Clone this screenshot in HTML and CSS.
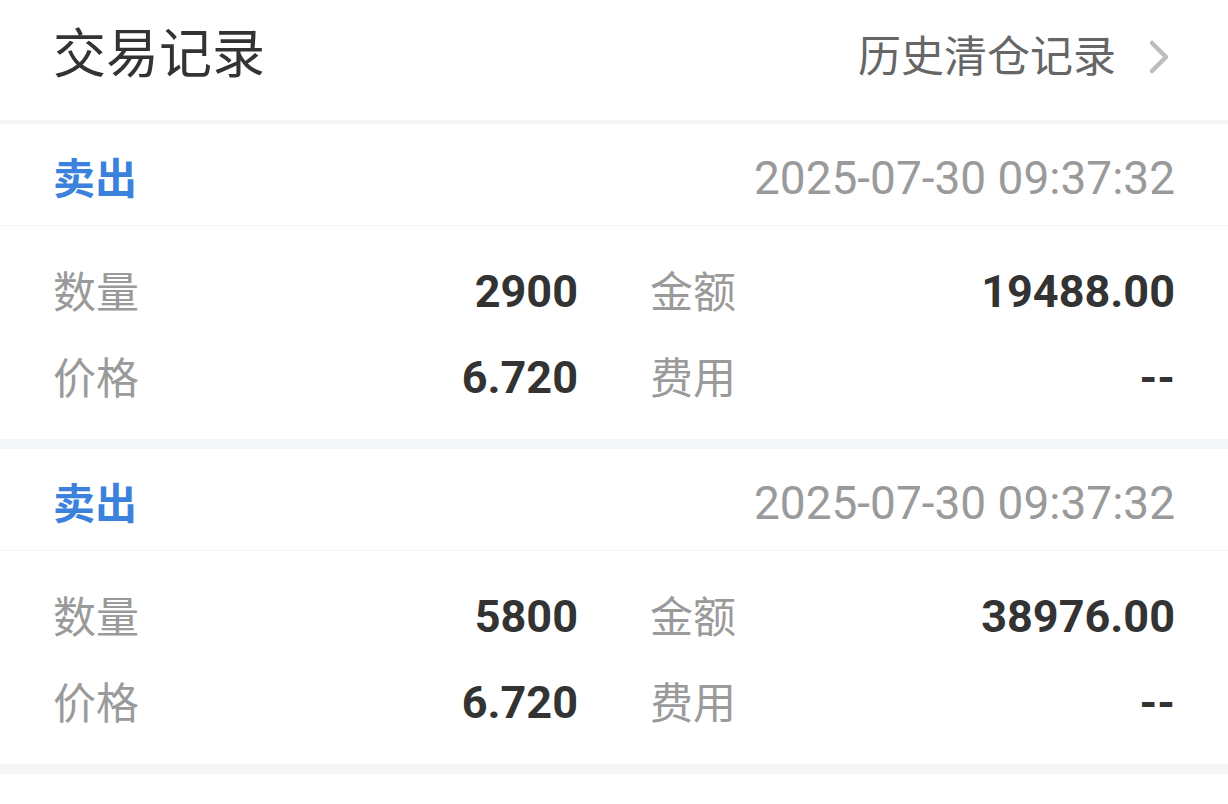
FILE: index.html
```html
<!DOCTYPE html>
<html lang="zh-CN">
<head>
    <meta charset="UTF-8">
    <meta name="viewport" content="width=device-width, initial-scale=1.0">
    <title>交易记录</title>
    <link rel="stylesheet" href="styles.css">
</head>
<body>
    <header class="top-bar">
        <h1 class="page-title">交易记录</h1>
        <a class="history-link" href="#">
            <span>历史清仓记录</span>
            <svg class="chevron" width="22" height="36" viewBox="0 0 22 36">
                <path d="M4 4 L18 18 L4 32" fill="none" stroke="#bdbdbd" stroke-width="4.5" stroke-linecap="round" stroke-linejoin="round"/>
            </svg>
        </a>
    </header>

    <div class="trade-list">
        <div class="trade-card">
            <div class="trade-head">
                <span class="trade-side">卖出</span>
                <span class="trade-time">2025-07-30 09:37:32</span>
            </div>
            <div class="trade-body">
                <div class="field"><span class="label">数量</span><span class="value">2900</span></div>
                <div class="field"><span class="label">金额</span><span class="value">19488.00</span></div>
                <div class="field"><span class="label">价格</span><span class="value">6.720</span></div>
                <div class="field"><span class="label">费用</span><span class="value">--</span></div>
            </div>
        </div>

        <div class="trade-card">
            <div class="trade-head">
                <span class="trade-side">卖出</span>
                <span class="trade-time">2025-07-30 09:37:32</span>
            </div>
            <div class="trade-body">
                <div class="field"><span class="label">数量</span><span class="value">5800</span></div>
                <div class="field"><span class="label">金额</span><span class="value">38976.00</span></div>
                <div class="field"><span class="label">价格</span><span class="value">6.720</span></div>
                <div class="field"><span class="label">费用</span><span class="value">--</span></div>
            </div>
        </div>

        <div class="trade-card">
            <div class="trade-head">
                <span class="trade-side">卖出</span>
                <span class="trade-time">2025-07-30 09:37:32</span>
            </div>
            <div class="trade-body">
                <div class="field"><span class="label">数量</span><span class="value">2900</span></div>
                <div class="field"><span class="label">金额</span><span class="value">19488.00</span></div>
                <div class="field"><span class="label">价格</span><span class="value">6.720</span></div>
                <div class="field"><span class="label">费用</span><span class="value">--</span></div>
            </div>
        </div>
    </div>
</body>
</html>
```

FILE: styles.css
```css
body {
    margin: 0;
    background: #ffffff;
    font-family: Roboto, "Noto Sans CJK SC", sans-serif;
    overflow: hidden;
}
.top-bar {
    display: flex;
    justify-content: space-between;
    align-items: center;
    height: 124px;
    box-sizing: border-box;
    padding: 0 53px 10px 53px;
    border-bottom: 4px solid #f5f6f8;
}
.page-title {
    margin: 0;
    font-size: 53px;
    font-weight: normal;
    line-height: 53px;
    color: #333333;
}
.history-link {
    display: flex;
    align-items: center;
    font-size: 43px;
    line-height: 43px;
    color: #666666;
    text-decoration: none;
    margin-top: 4px;
}
.chevron {
    margin-left: 32px;
    margin-right: 5px;
}
.trade-card {
    border-bottom: 10px solid #f5f6f8;
}
.trade-head {
    display: flex;
    justify-content: space-between;
    align-items: center;
    height: 101px;
    padding: 0 53px;
    border-bottom: 1px solid #f4f4f4;
}
.trade-side {
    font-size: 42px;
    font-weight: bold;
    color: #3b82dc;
    padding-top: 2px;
}
.trade-time {
    font-size: 46px;
    color: #9a9a9a;
    padding-top: 6px;
}
.trade-body {
    display: grid;
    grid-template-columns: 1fr 1fr;
    column-gap: 72px;
    padding: 20px 53px 21px 53px;
}
.field {
    display: flex;
    justify-content: space-between;
    align-items: center;
    height: 86px;
}
.label {
    font-size: 43px;
    color: #9a9a9a;
}
.value {
    font-size: 45px;
    font-weight: bold;
    color: #333333;
    padding-top: 4px;
}
```
